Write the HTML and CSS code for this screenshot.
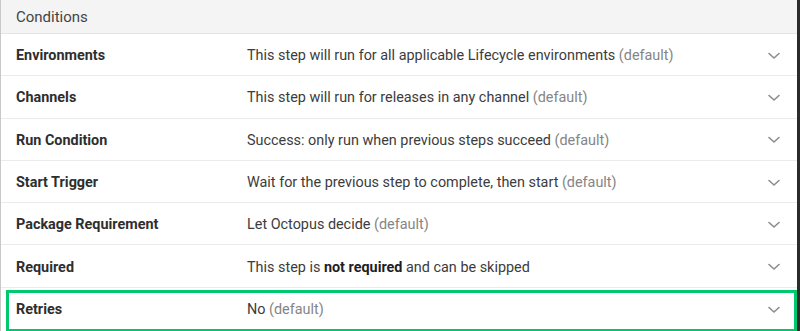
FILE: index.html
```html
<!DOCTYPE html>
<html lang="en">
<head>
    <meta charset="UTF-8">
    <meta name="viewport" content="width=device-width, initial-scale=1.0">
    <title>Conditions</title>
    <link rel="stylesheet" href="styles.css">
</head>
<body>

    <div class="panel">
        <div class="panel-header">Conditions</div>

        <div class="row">
            <div class="row-label">Environments</div>
            <div class="row-summary">This step will run for all applicable Lifecycle environments <span class="muted">(default)</span></div>
            <svg class="chevron" width="12" height="8" viewBox="0 0 12 8"><path d="M1 1.5l5 4.5 5-4.5"></path></svg>
        </div>

        <div class="row">
            <div class="row-label">Channels</div>
            <div class="row-summary">This step will run for releases in any channel <span class="muted">(default)</span></div>
            <svg class="chevron" width="12" height="8" viewBox="0 0 12 8"><path d="M1 1.5l5 4.5 5-4.5"></path></svg>
        </div>

        <div class="row">
            <div class="row-label">Run Condition</div>
            <div class="row-summary">Success: only run when previous steps succeed <span class="muted">(default)</span></div>
            <svg class="chevron" width="12" height="8" viewBox="0 0 12 8"><path d="M1 1.5l5 4.5 5-4.5"></path></svg>
        </div>

        <div class="row">
            <div class="row-label">Start Trigger</div>
            <div class="row-summary">Wait for the previous step to complete, then start <span class="muted">(default)</span></div>
            <svg class="chevron" width="12" height="8" viewBox="0 0 12 8"><path d="M1 1.5l5 4.5 5-4.5"></path></svg>
        </div>

        <div class="row">
            <div class="row-label">Package Requirement</div>
            <div class="row-summary">Let Octopus decide <span class="muted">(default)</span></div>
            <svg class="chevron" width="12" height="8" viewBox="0 0 12 8"><path d="M1 1.5l5 4.5 5-4.5"></path></svg>
        </div>

        <div class="row">
            <div class="row-label">Required</div>
            <div class="row-summary">This step is <strong>not required</strong> and can be skipped</div>
            <svg class="chevron" width="12" height="8" viewBox="0 0 12 8"><path d="M1 1.5l5 4.5 5-4.5"></path></svg>
        </div>

        <div class="row highlight">
            <div class="row-label">Retries</div>
            <div class="row-summary">No <span class="muted">(default)</span></div>
            <svg class="chevron" width="12" height="8" viewBox="0 0 12 8"><path d="M1 1.5l5 4.5 5-4.5"></path></svg>
        </div>
    </div>

</body>
</html>
```

FILE: styles.css
```css
* {
    margin: 0;
    padding: 0;
    box-sizing: border-box;
    font-family: Roboto, "Liberation Sans", Arial, sans-serif;
}

body {
    background-color: white;
    color: #333;
    width: 800px;
    height: 331px;
    overflow: hidden;
}

.panel {
    width: 800px;
    height: 331px;
    border-left: 1px solid #c8c8c8;
    border-right: 3px solid #2b2b2b;
    background-color: white;
}

.panel-header {
    height: 34px;
    background-color: #f4f4f4;
    border-bottom: 1px solid #e4e4e4;
    padding-left: 15px;
    padding-top: 1px;
    display: flex;
    align-items: center;
    font-size: 15px;
    color: #444;
}

.row {
    height: 42.3px;
    display: flex;
    align-items: center;
    padding-left: 15px;
    padding-right: 17px;
    padding-top: 2px;
    border-bottom: 1px solid #ebebeb;
    font-size: 14.4px;
    position: relative;
}

.row-label {
    width: 231px;
    font-weight: bold;
    color: #2e2e2e;
}

.row-summary {
    flex: 1;
    color: #3c3c3c;
}

.row-summary strong {
    color: #1e1e1e;
}

.muted {
    color: #858585;
}

.chevron {
    fill: none;
    stroke: #8c8c8c;
    stroke-width: 1.6;
    stroke-linecap: round;
    stroke-linejoin: round;
}

.highlight {
    border-bottom: none;
}

.highlight::after {
    content: "";
    position: absolute;
    left: 5px;
    right: 0;
    top: 2px;
    bottom: -2px;
    border: 3px solid #00c86e;
}
```
